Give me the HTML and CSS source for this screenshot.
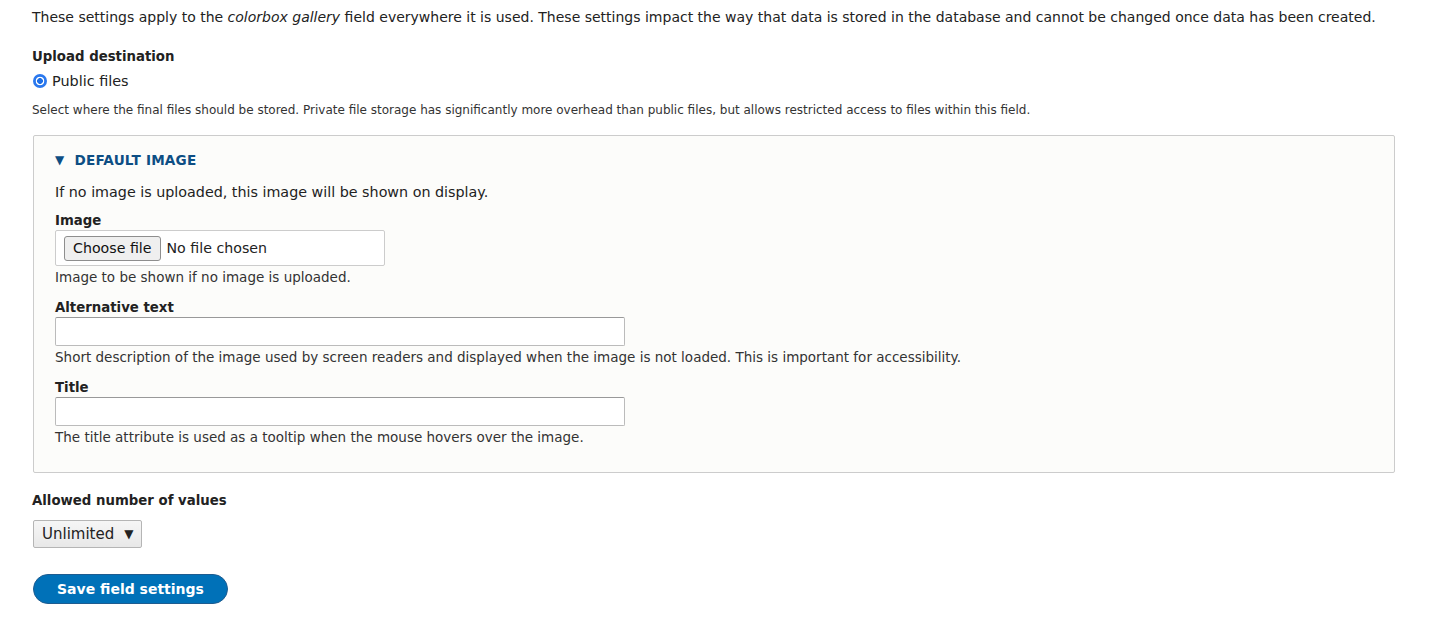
FILE: index.html
```html
<!DOCTYPE html>
<html>
<head>
<meta charset="utf-8">
<link rel="stylesheet" href="styles.css">
</head>
<body>
<div class="page">
  <p class="intro">These settings apply to the <em>colorbox gallery</em> field everywhere it is used. These settings impact the way that data is stored in the database and cannot be changed once data has been created.</p>

  <div class="item">
    <div class="label">Upload destination</div>
    <label class="radio"><span class="radio-dot"></span>Public files</label>
    <div class="desc-small">Select where the final files should be stored. Private file storage has significantly more overhead than public files, but allows restricted access to files within this field.</div>
  </div>

  <fieldset class="box">
    <div class="legend"><span class="tri">▼</span>DEFAULT IMAGE</div>
    <p class="box-intro">If no image is uploaded, this image will be shown on display.</p>

    <div class="field">
      <div class="label">Image</div>
      <div class="file"><span class="file-btn">Choose file</span><span class="file-text">No file chosen</span></div>
      <div class="desc">Image to be shown if no image is uploaded.</div>
    </div>

    <div class="field">
      <div class="label">Alternative text</div>
      <div class="text-input"></div>
      <div class="desc">Short description of the image used by screen readers and displayed when the image is not loaded. This is important for accessibility.</div>
    </div>

    <div class="field">
      <div class="label">Title</div>
      <div class="text-input"></div>
      <div class="desc">The title attribute is used as a tooltip when the mouse hovers over the image.</div>
    </div>
  </fieldset>

  <div class="item">
    <div class="label">Allowed number of values</div>
    <div class="select">Unlimited<span class="caret">▼</span></div>
  </div>

  <div class="actions"><span class="btn">Save field settings</span></div>
</div>
</body>
</html>
```

FILE: styles.css
```css
html, body {
  margin: 0;
  padding: 0;
  background: #ffffff;
}
.page {
  font-family: "DejaVu Sans", Verdana, sans-serif;
  color: #222222;
  font-size: 13px;
  padding: 8px 32px 0 32px;
}
.intro {
  margin: 0 0 22px 0;
  font-size: 14px;
  line-height: 18px;
}
.intro em { font-style: italic; }
.item { margin-bottom: 10px; }
.label {
  font-weight: bold;
  font-size: 13.3px;
  line-height: 18px;
  margin-bottom: 7px;
}
.radio {
  display: flex;
  align-items: center;
  font-size: 14.4px;
  line-height: 18px;
  margin-top: -1px;
}
.radio-dot {
  width: 14px;
  height: 14px;
  border-radius: 50%;
  background: radial-gradient(circle, #1e6fe6 0 2.6px, #ffffff 3.2px 4px, #2a78ee 4.6px);
  margin: 0 5px 0 1px;
  flex: none;
}
.desc-small {
  font-size: 12px;
  line-height: 16px;
  color: #333;
  margin-top: 12px;
}
.box {
  margin: 17px 4px 19px 1px;
  padding: 15px 21px 13px 21px;
  border: 1px solid #cccccc;
  border-radius: 2px;
  background: #fcfcfa;
}
.legend {
  color: #0d4e84;
  font-weight: bold;
  font-size: 13.6px;
  line-height: 18px;
  letter-spacing: 0.2px;
}
.tri {
  font-size: 12px;
  margin-right: 10px;
  display: inline-block;
  vertical-align: 1px;
}
.box-intro {
  margin: 14px 0 11px 0;
  font-size: 14.3px;
  line-height: 18px;
}
.field { margin-bottom: 13px; }
.field .label { margin-bottom: 0; }
.file {
  width: 330px;
  height: 36px;
  box-sizing: border-box;
  border: 1px solid #cccccc;
  border-radius: 2px;
  background: #fff;
  display: flex;
  align-items: center;
  padding-left: 8px;
}
.file-btn {
  height: 25px;
  box-sizing: border-box;
  border: 1px solid #8e8e8e;
  border-radius: 3px;
  background: #efefef;
  padding: 0 8px;
  line-height: 23px;
  font-size: 14.2px;
  color: #111;
}
.file-text {
  margin-left: 6px;
  font-size: 14.2px;
}
.desc {
  font-size: 13.5px;
  line-height: 18px;
  color: #333;
  margin-top: 2px;
}
.text-input {
  width: 570px;
  height: 29px;
  box-sizing: border-box;
  border: 1px solid #bbbbbb;
  border-top-color: #999;
  border-radius: 2px;
  background: #fff;
}
.select {
  display: inline-flex;
  align-items: center;
  height: 28px;
  box-sizing: border-box;
  border: 1px solid #b5b5b5;
  border-radius: 2px;
  background: linear-gradient(#f6f6f6, #e8e8e8);
  padding: 0 8px 0 8px;
  font-size: 15px;
  margin-top: 3px;
  margin-left: 1px;
  color: #222;
}
.caret {
  font-size: 12px;
  margin-left: 10px;
}
.actions { margin-top: 26px; }
.btn {
  display: inline-block;
  background: #0071b8;
  border: 1px solid #1e5c90;
  color: #fff;
  font-weight: bold;
  font-size: 14px;
  line-height: 28px;
  padding: 0 23px;
  border-radius: 20px;
  margin-left: 1px;
}
```
